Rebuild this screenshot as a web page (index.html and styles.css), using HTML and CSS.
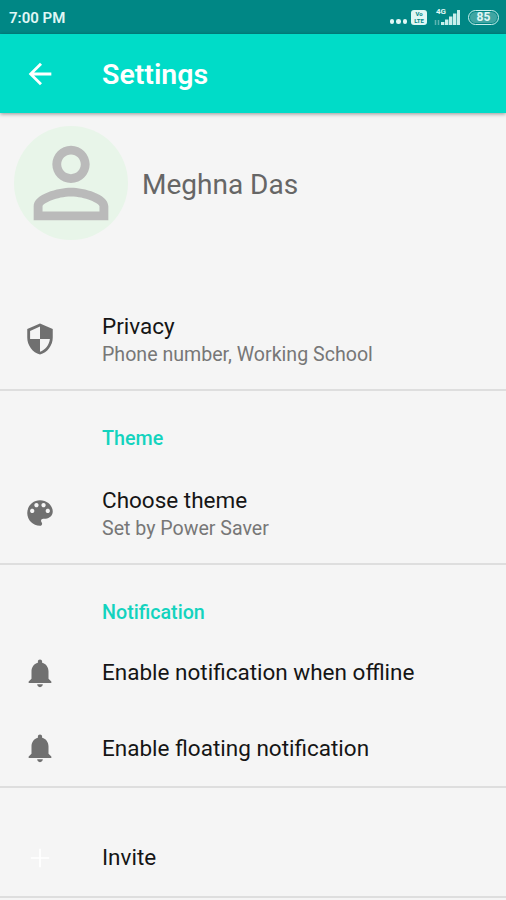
FILE: index.html
```html
<!DOCTYPE html>
<html lang="en">
<head>
    <meta charset="UTF-8">
    <meta name="viewport" content="width=device-width, initial-scale=1.0">
    <title>Settings</title>
    <link rel="stylesheet" href="styles.css">
</head>
<body>

    <div class="status-bar">
        <span class="clock">7:00 PM</span>
        <div class="status-icons">
            <span class="dots"><i></i><i></i><i></i></span>
            <span class="volte"><span>Vo</span><span>LTE</span></span>
            <div class="signal">
                <span class="network">4G</span>
                <svg width="27" height="15" viewBox="0 0 27 15">
                    <path class="arrows" d="M1.5 10v5M4.5 10v5"/>
                    <path d="M7 12h3.400v3H7zM11 9.500h3.400V15H11zM15 6.500h3.400V15H15zM19 3.500h3.400V15H19zM23 0h3v15h-3z"/>
                </svg>
            </div>
            <span class="battery"><span>85</span></span>
        </div>
    </div>

    <header class="app-bar">
        <svg class="icon back" viewBox="0 0 24 24"><path d="M20 11H7.83l5.59-5.59L12 4l-8 8 8 8 1.41-1.41L7.83 13H20v-2z"/></svg>
        <h1>Settings</h1>
    </header>

    <div class="profile">
        <div class="avatar">
            <svg viewBox="0 0 24 24"><path d="M12 5.9c1.16 0 2.1.94 2.1 2.1s-.94 2.1-2.1 2.1S9.9 9.16 9.9 8s.94-2.1 2.1-2.1m0 9c2.97 0 6.1 1.46 6.1 2.1v1.1H5.9V17c0-.64 3.13-2.1 6.1-2.1M12 4C9.79 4 8 5.79 8 8s1.79 4 4 4 4-1.79 4-4-1.79-4-4-4zm0 9c-2.67 0-8 1.34-8 4v3h16v-3c0-2.66-5.33-4-8-4z"/></svg>
        </div>
        <span class="name">Meghna Das</span>
    </div>

    <section class="group privacy">
        <div class="item two-line">
            <svg class="icon" viewBox="0 0 24 24"><path d="M12 1L3 5v6c0 5.55 3.84 10.74 9 12 5.16-1.26 9-6.45 9-12V5l-9-4zm0 10.99h7c-.53 4.12-3.28 7.79-7 8.94V12H5V6.3l7-3.11v8.8z"/></svg>
            <div class="text">
                <p class="title">Privacy</p>
                <p class="summary">Phone number, Working School</p>
            </div>
        </div>
    </section>

    <section class="group theme">
        <h2>Theme</h2>
        <div class="item two-line">
            <svg class="icon" viewBox="0 0 24 24"><path d="M12 3c-4.97 0-9 4.03-9 9s4.03 9 9 9c.83 0 1.5-.67 1.5-1.5 0-.39-.15-.74-.39-1.01-.23-.26-.38-.61-.38-.99 0-.83.67-1.5 1.5-1.5H16c2.76 0 5-2.24 5-5 0-4.42-4.03-8-9-8zm-5.5 9c-.83 0-1.5-.67-1.5-1.5S5.67 9 6.5 9 8 9.67 8 10.5 7.33 12 6.5 12zm3-4C8.67 8 8 7.33 8 6.5S8.67 5 9.5 5s1.5.67 1.5 1.5S10.33 8 9.5 8zm5 0c-.83 0-1.5-.67-1.5-1.5S13.67 5 14.5 5s1.5.67 1.5 1.5S15.33 8 14.5 8zm3 4c-.83 0-1.5-.67-1.5-1.5S16.67 9 17.5 9s1.5.67 1.5 1.5-.67 1.5-1.5 1.5z"/></svg>
            <div class="text">
                <p class="title">Choose theme</p>
                <p class="summary">Set by Power Saver</p>
            </div>
        </div>
    </section>

    <section class="group notification">
        <h2>Notification</h2>
        <div class="item">
            <svg class="icon" viewBox="0 0 24 24"><path d="M12 22c1.1 0 2-.9 2-2h-4c0 1.1.89 2 2 2zm6-6v-5c0-3.07-1.64-5.64-4.5-6.32V4c0-.83-.67-1.5-1.5-1.5s-1.5.67-1.5 1.5v.68C7.63 5.36 6 7.92 6 11v5l-2 2v1h16v-1l-2-2z"/></svg>
            <p class="title">Enable notification when offline</p>
        </div>
        <div class="item">
            <svg class="icon" viewBox="0 0 24 24"><path d="M12 22c1.1 0 2-.9 2-2h-4c0 1.1.89 2 2 2zm6-6v-5c0-3.07-1.64-5.64-4.5-6.32V4c0-.83-.67-1.5-1.5-1.5s-1.5.67-1.5 1.5v.68C7.63 5.36 6 7.92 6 11v5l-2 2v1h16v-1l-2-2z"/></svg>
            <p class="title">Enable floating notification</p>
        </div>
    </section>

    <section class="group invite">
        <div class="item">
            <svg class="icon plus" viewBox="0 0 24 24"><path d="M18.5 12.600h-5.900v5.900h-1.200v-5.900H5.500v-1.200h5.900V5.500h1.200v5.900h5.900z"/></svg>
            <p class="title">Invite</p>
        </div>
    </section>

</body>
</html>
```
FILE: styles.css
```css
* {
    box-sizing: border-box;
}

body {
    margin: 0;
    height: 900px;
    overflow: hidden;
    font-family: Roboto, "Liberation Sans", sans-serif;
    background-color: #f5f5f5;
    color: #151515;
}

h1, h2, p {
    margin: 0;
}

.status-bar {
    display: flex;
    align-items: center;
    justify-content: space-between;
    height: 34px;
    padding: 0 7px 0 9px;
    background-color: #008785;
    color: #e0f7f5;
}

.clock {
    font-size: 15px;
    font-weight: 600;
    line-height: 18px;
    padding-top: 1px;
}

.status-icons {
    display: flex;
    align-items: center;
}

.dots {
    display: flex;
    gap: 2px;
    margin: 9px 4px 0 0;
}

.dots i {
    width: 4.5px;
    height: 4.5px;
    border-radius: 50%;
    background-color: #e0f7f5;
}

.volte {
    display: flex;
    flex-direction: column;
    align-items: center;
    justify-content: center;
    width: 16px;
    height: 15px;
    margin-right: 7px;
    border-radius: 3px;
    background-color: #e0f7f5;
    color: #008785;
    font-size: 6px;
    font-weight: 700;
    line-height: 7px;
}

.signal {
    position: relative;
    height: 15px;
    margin-right: 7px;
}

.signal svg {
    display: block;
    fill: #c9efec;
}

.signal .arrows {
    stroke: #5cb5b2;
    stroke-width: 1.5;
}

.network {
    position: absolute;
    top: -2px;
    left: 2px;
    font-size: 8px;
    font-weight: 700;
    line-height: 8px;
}

.battery {
    display: flex;
    width: 31px;
    height: 15px;
    padding: 1px;
    border: 1.5px solid #c9efec;
    border-radius: 8px;
}

.battery span {
    flex: 1;
    border-radius: 6px;
    background-color: #3fa5a2;
    color: #e0f7f5;
    font-size: 12px;
    font-weight: 700;
    line-height: 11px;
    text-align: center;
}

.app-bar {
    display: flex;
    align-items: center;
    height: 79px;
    padding: 0 23px;
    background-color: #00dcc8;
    color: #fff;
    box-shadow: 0 1px 4px rgba(0, 0, 0, 0.4);
}

.app-bar h1 {
    font-size: 28.5px;
    font-weight: 600;
    line-height: 34px;
    padding-top: 2px;
}

.icon {
    flex: none;
    width: 34px;
    height: 34px;
    margin-right: 45px;
    fill: #707070;
}

.back {
    fill: #fff;
}

.profile {
    display: flex;
    align-items: center;
    height: 114px;
    margin-top: 13px;
    padding-left: 14px;
}

.avatar {
    display: flex;
    align-items: center;
    justify-content: center;
    width: 114px;
    height: 114px;
    border-radius: 50%;
    background-color: #e8f5e9;
}

.avatar svg {
    width: 112px;
    height: 112px;
    fill: #bababa;
}

.name {
    margin-left: 14px;
    padding-top: 3px;
    font-size: 28px;
    line-height: 34px;
    color: #666;
}

.group {
    border-bottom: 2px solid #dedede;
}

.group h2 {
    padding-left: 102px;
    font-size: 19.7px;
    font-weight: 500;
    line-height: 24px;
    color: #13d3be;
}

.item {
    display: flex;
    align-items: center;
    height: 75.5px;
    padding-left: 23px;
}

.two-line {
    height: 101px;
}

.text {
    padding-top: 3px;
}

.title {
    font-size: 22.5px;
    line-height: 29px;
}

.summary {
    font-size: 19.6px;
    line-height: 28px;
    color: #777;
}

.privacy {
    padding-top: 48px;
}

.theme {
    padding-top: 36px;
}

.theme h2 {
    margin-bottom: 11px;
}

.notification {
    padding-top: 36px;
}

.notification h2 {
    margin-bottom: 10px;
}

.invite {
    padding-top: 32px;
}

.plus {
    fill: #fff;
}
```
